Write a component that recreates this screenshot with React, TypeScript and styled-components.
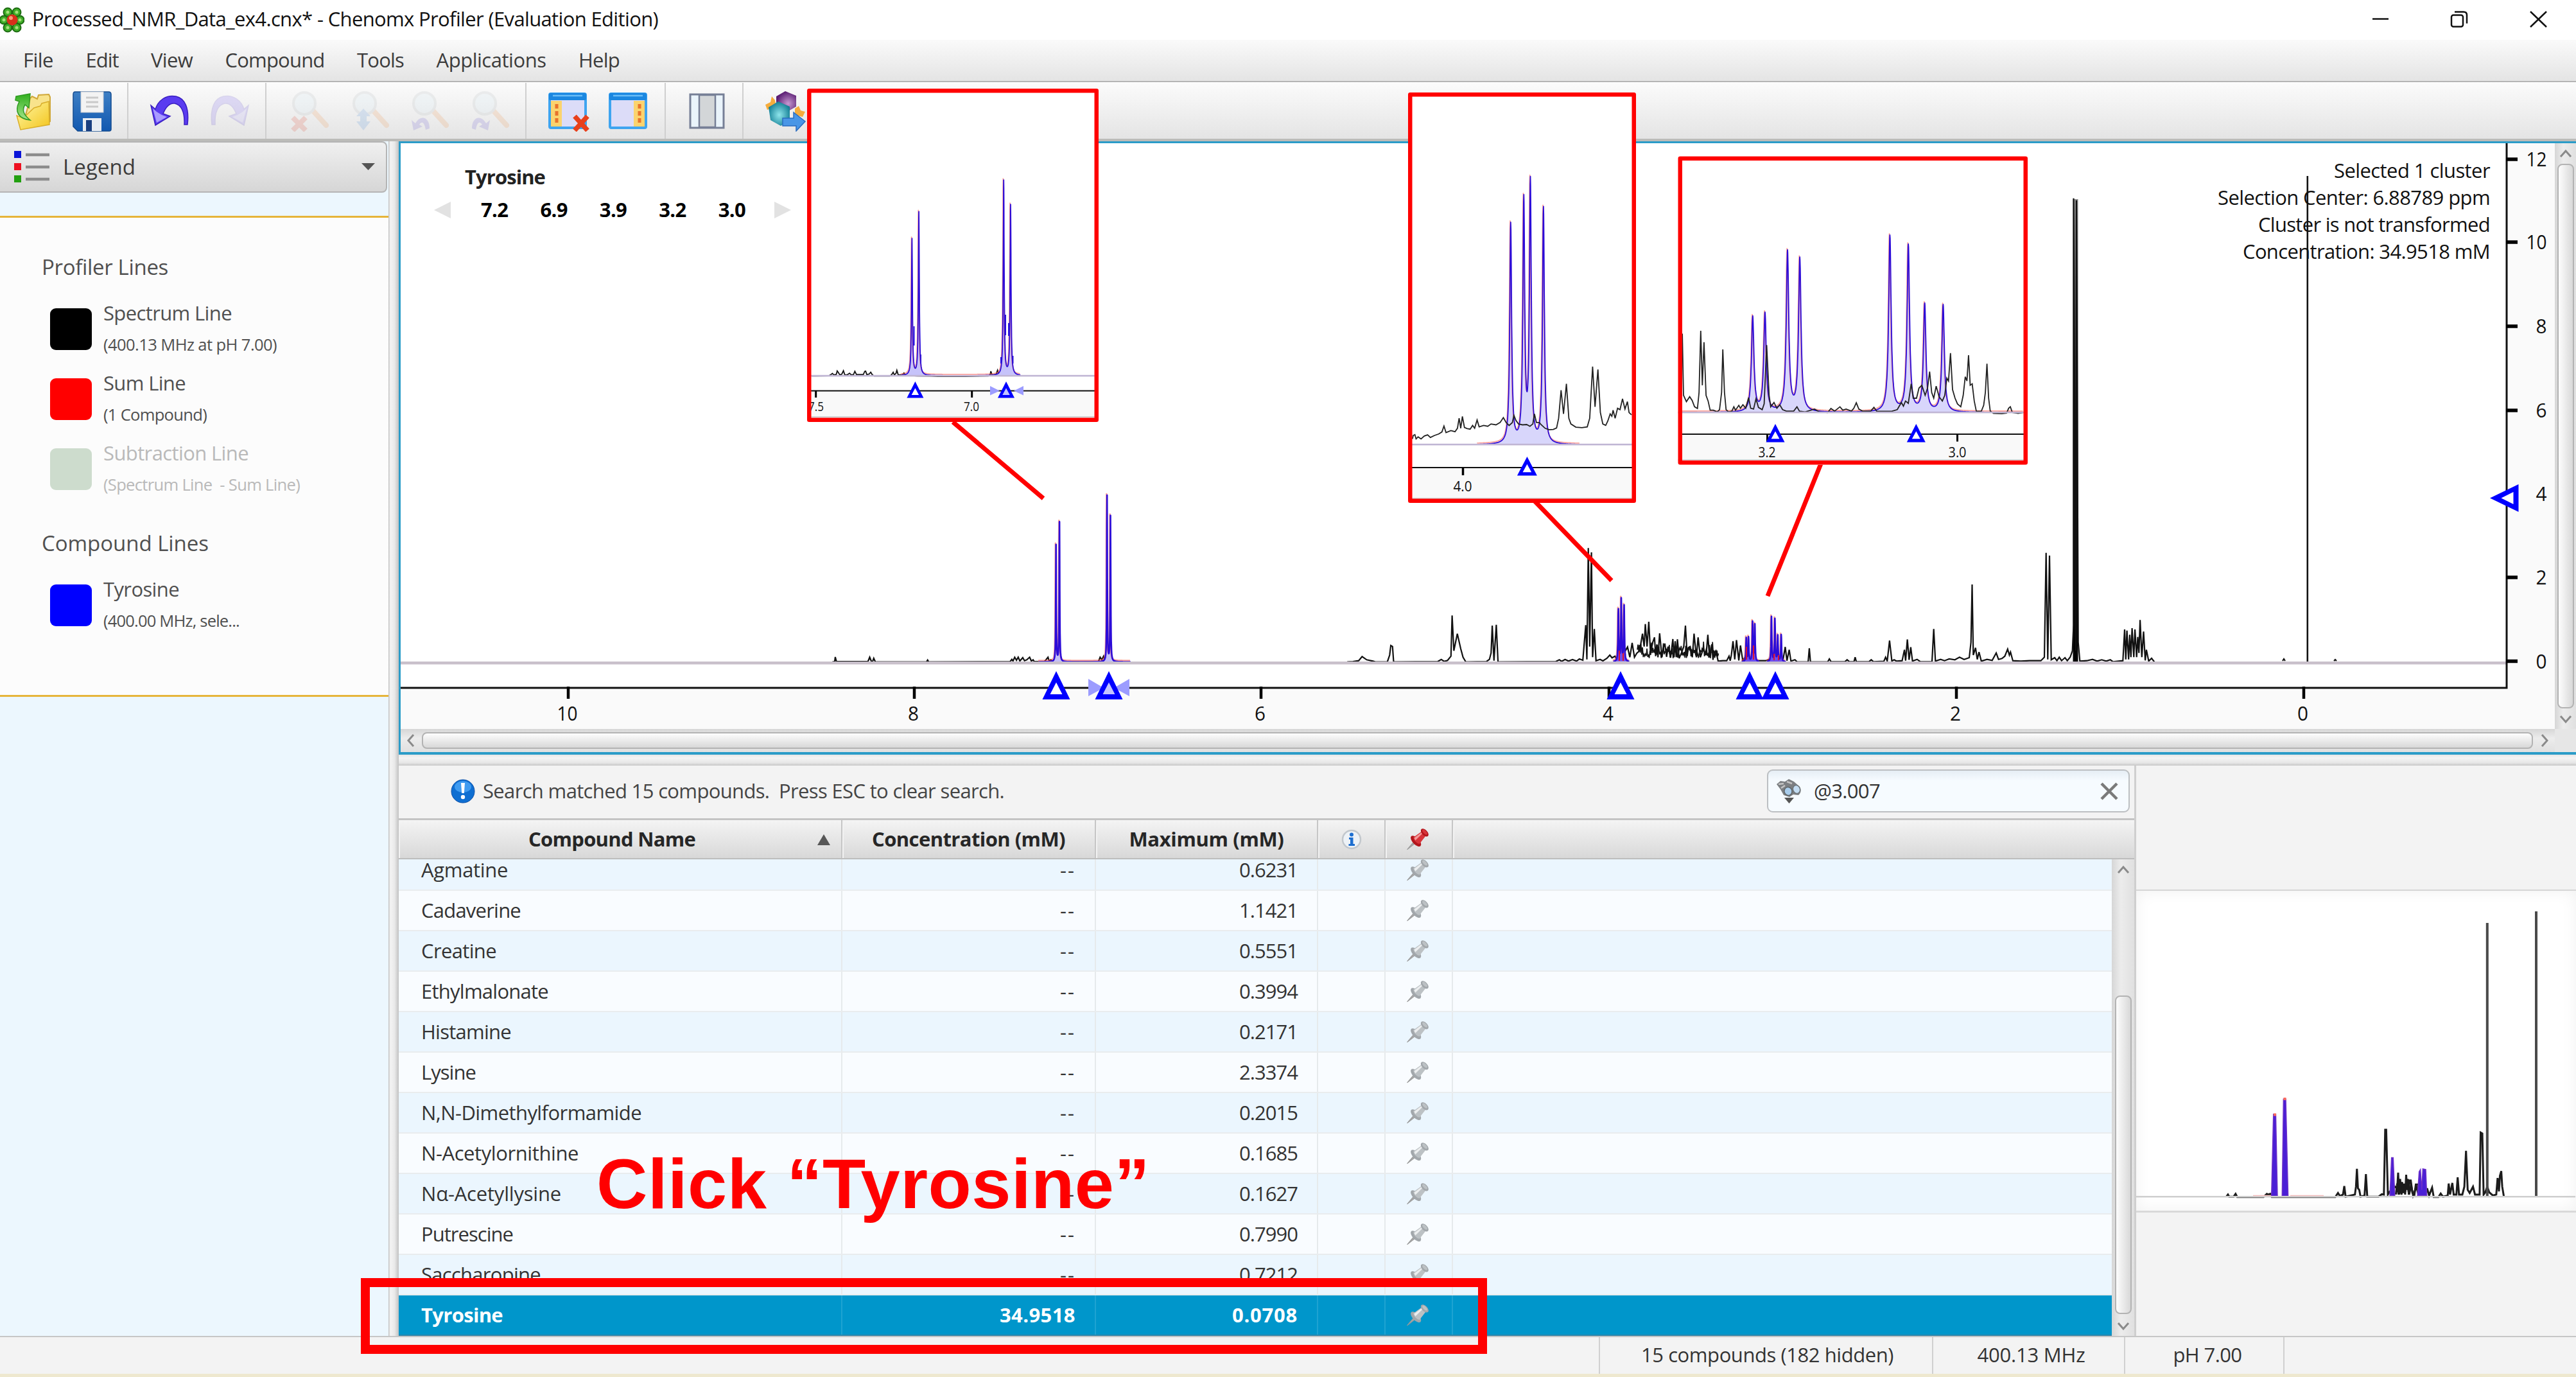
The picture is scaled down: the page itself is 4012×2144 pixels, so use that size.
import React, { useLayoutEffect, useRef, useState } from "react";
import styled, { createGlobalStyle, css } from "styled-components";

const FONT = `"Open Sans", "Noto Sans", sans-serif`;

const Global = createGlobalStyle`
  html, body { margin: 0; padding: 0; }
  body { width: 4012px; height: 2144px; overflow: hidden; background: #f3f3f3; }
  * { box-sizing: border-box; }
  svg { display: block; flex: none; }
`;

/* ---------- text ---------- */

const TextSpan = styled.span<{ $size?: number; $bold?: boolean; $color?: string }>`
  display: inline-block;
  flex: none;
  white-space: pre;
  font-size: ${(p) => p.$size ?? 31}px;
  font-weight: ${(p) => (p.$bold ? 700 : 400)};
  color: ${(p) => p.$color ?? "inherit"};
`;

type TextProps = { w: number; size?: number; bold?: boolean; color?: string; children: string };

/* A label tracked so that it fills the given width. */
function Text({ w, size, bold, color, children }: TextProps) {
  const ref = useRef<HTMLSpanElement>(null);
  const [spacing, setSpacing] = useState(0);
  useLayoutEffect(() => {
    const natural = ref.current!.getBoundingClientRect().width - spacing * children.length;
    setSpacing((w - natural) / children.length);
  }, [w, children]);
  return (
    <TextSpan ref={ref} $size={size} $bold={bold} $color={color} style={{ letterSpacing: spacing }}>
      {children}
    </TextSpan>
  );
}

/* ---------- frame ---------- */

const Window = styled.div`
  position: relative;
  display: flex;
  flex-direction: column;
  width: 4012px;
  height: 2144px;
  overflow: hidden;
  font-family: ${FONT};
  line-height: 1.2;
  color: #333;
  background: #f3f3f3;
`;

const TitleBar = styled.header`
  flex: none;
  display: flex;
  align-items: center;
  height: 62px;
  background: #fff;
  color: #111;
`;
const TitleText = styled.div`
  flex: 1;
  padding: 1px 0 0 12px;
  line-height: 60px;
`;
const Controls = styled.div`
  display: flex;
  align-items: center;
  gap: 92px;
  padding: 0 43px 2px 0;
`;

const MenuBar = styled.nav`
  flex: none;
  display: flex;
  align-items: center;
  gap: 50.5px;
  height: 66px;
  padding: 0 0 1px 36px;
  background: linear-gradient(#fafafa, #e4e4e4);
  border-bottom: 2px solid #b4b4b4;
  color: #3c3c3c;
`;

const Toolbar = styled.div`
  flex: none;
  display: flex;
  height: 92px;
  background: linear-gradient(#fbfbfb, #e4e4e4);
  border-top: 1px solid #fff;
  border-bottom: 4px solid #bcbcb9;
`;
const ToolGroup = styled.div<{ $w: number; $pad: number; $last?: boolean }>`
  display: flex;
  align-items: center;
  gap: 29.5px;
  width: ${(p) => p.$w}px;
  padding-left: ${(p) => p.$pad}px;
  border-right: ${(p) => (p.$last ? "0" : "2px solid #cfcfcf")};
`;

const Body = styled.main`
  flex: none;
  display: flex;
  height: 1860px;
`;

/* ---------- sidebar ---------- */

const Sidebar = styled.aside`
  flex: none;
  width: 605px;
  background: #ecf7fe;
  display: flex;
  flex-direction: column;
`;
const LegendSelect = styled.div`
  flex: none;
  display: flex;
  align-items: center;
  height: 80px;
  margin-right: 2px;
  padding: 0 16px 0 20px;
  background: linear-gradient(#f0f0f0, #d6d6d6);
  border: 2px solid #b5b5b5;
  border-left: 0;
  border-radius: 0 8px 8px 0;
  color: #3c3c3c;
`;
const LegendName = styled.div`
  flex: 1;
  padding-left: 20px;
`;
const LegendCard = styled.section`
  flex: none;
  height: 749px;
  margin-top: 36px;
  padding: 55px 0 0 65px;
  background: #fcfcfc;
  border-top: 3px solid #e6b53a;
  border-bottom: 3px solid #e6b53a;
  color: #505050;
`;
const LegendHeading = styled.h3<{ $top?: number }>`
  margin: ${(p) => p.$top ?? 0}px 0 0;
  height: 44px;
  font-size: 33px;
  font-weight: 400;
  line-height: 44px;
`;
const LegendEntry = styled.div<{ $top?: number; $off?: boolean }>`
  display: flex;
  height: 109.2px;
  margin-top: ${(p) => p.$top ?? 0}px;
  padding-left: 13px;
  color: ${(p) => (p.$off ? "#b9b9b9" : "#505050")};
`;
const Swatch = styled.div<{ $c: string }>`
  width: 65px;
  height: 65px;
  margin: 14px 18px 0 0;
  border-radius: 9px;
  background: ${(p) => p.$c};
`;
const EntryText = styled.div`
  display: flex;
  flex-direction: column;
  align-items: flex-start;
  margin-top: -3px;
  line-height: 49px;
`;

const VSplit = styled.div`
  flex: none;
  width: 16px;
  background: linear-gradient(90deg, #bdbdbd, #f4f4f4 18%, #e9e9e9 60%, #c2c2c2);
`;

/* ---------- right side ---------- */

const Right = styled.div`
  flex: none;
  width: 3391px;
  display: flex;
  flex-direction: column;
`;
const PlotPanel = styled.section`
  flex: none;
  display: grid;
  grid-template-columns: 3355px 33px;
  grid-template-rows: 912px 36px;
  height: 955px;
  border: 3px solid #2b9cc8;
  border-bottom-width: 4px;
  border-right: 0;
  background: #e6e6e6;
`;
const PlotArea = styled.div`
  position: relative;
  background: #fafafa;
`;
const ClusterNav = styled.div`
  position: absolute;
  left: 52px;
  top: 30px;
  color: #222;
`;
const ClusterTitle = styled.div`
  padding-left: 48px;
  height: 50px;
  line-height: 44px;
`;
const ClusterRow = styled.div`
  display: flex;
  align-items: center;
  height: 48px;
  color: #000;
`;
const ClusterValues = styled.div`
  display: flex;
  gap: 50px;
  padding: 0 45px 0 47px;
`;
const ClusterInfo = styled.div`
  position: absolute;
  right: 101px;
  top: 21px;
  display: flex;
  flex-direction: column;
  align-items: flex-end;
  line-height: 42.1px;
  color: #111;
`;

const ScrollTrack = styled.div<{ $v?: boolean; $w?: number }>`
  display: flex;
  flex-direction: ${(p) => (p.$v ? "column" : "row")};
  align-items: center;
  ${(p) => p.$w && css`width: ${p.$w}px;`}
  background: linear-gradient(${(p) => (p.$v ? "90deg" : "180deg")}, #d6d6d6, #ececec 40%, #e0e0e0);
  ${(p) => (p.$v ? css`padding: 8px 0 8px;` : css`padding: 0 8px;`)}
`;
const Thumb = styled.div<{ $v?: boolean; $len: number; $start?: number }>`
  flex: none;
  border: 2px solid #b3b3b3;
  border-radius: 8px;
  ${(p) =>
    p.$v
      ? css`
          width: 26px;
          height: ${p.$len}px;
          margin: ${p.$start ?? 8}px 0 auto;
          background: linear-gradient(90deg, #fdfdfd, #d8d8d8);
        `
      : css`
          height: 26px;
          width: ${p.$len}px;
          margin: 0 auto 0 ${p.$start ?? 8}px;
          background: linear-gradient(#fdfdfd, #d8d8d8);
        `}
`;
const HSplit = styled.div`
  flex: none;
  height: 17px;
  background: linear-gradient(#e6e6e6, #f4f4f4 30%, #e6e6e6 75%, #c6c6c6);
`;
const Lower = styled.div`
  flex: none;
  display: flex;
  height: 888px;
`;

/* ---------- table ---------- */

const TablePanel = styled.section`
  flex: none;
  width: 2706px;
  display: flex;
  flex-direction: column;
  border-right: 3px solid #cfcfcf;
`;
const SearchBar = styled.div`
  flex: none;
  display: flex;
  align-items: flex-start;
  height: 82px;
  padding: 6px 7px 0 81px;
`;
const Message = styled.div`
  flex: 1;
  display: flex;
  align-items: center;
  gap: 12px;
  height: 66px;
  padding-top: 1px;
  color: #444;
`;
const SearchBox = styled.div`
  display: flex;
  align-items: center;
  width: 565px;
  height: 67px;
  padding: 0 16px 0 12px;
  background: linear-gradient(#e6eef5, #f6fbff 25%);
  border: 2px solid #bcbfc2;
  border-radius: 9px;
`;
const SearchValue = styled.div`
  flex: 1;
  padding-left: 19px;
`;

const COLS = "691px 395px 346px 105px 105px 1fr";

const HeadRow = styled.div`
  flex: none;
  display: grid;
  grid-template-columns: ${COLS};
  height: 64px;
  border-top: 3px solid #c4c4c4;
  border-bottom: 2px solid #bdbdbd;
  background: linear-gradient(#f4f4f4, #d8d8d8);
`;
const HeadCell = styled.div<{ $shift?: number }>`
  display: flex;
  align-items: center;
  justify-content: center;
  position: relative;
  padding-right: ${(p) => p.$shift ?? 0}px;
  border-right: 2px solid #c6c6c6;
  box-shadow: inset 2px 0 0 #f2f2f2;
  color: #262626;
  &:last-child { border-right: 0; }
`;
const SortMark = styled.div`
  position: absolute;
  right: 17px;
  top: 22px;
  border: 10.5px solid transparent;
  border-top: 0;
  border-bottom: 17px solid #575757;
`;
const TableBody = styled.div`
  flex: none;
  display: flex;
  height: 742px;
`;
const Rows = styled.div`
  width: 2668px;
  overflow: hidden;
  display: flex;
  flex-direction: column;
  justify-content: flex-end;
`;
const Row = styled.div<{ $alt?: boolean; $sel?: boolean }>`
  flex: none;
  display: grid;
  grid-template-columns: ${COLS};
  height: 63px;
  background: ${(p) => (p.$sel ? "#0096cb" : p.$alt ? "#ebf6fe" : "#f9fcff")};
  border-bottom: 2px solid ${(p) => (p.$sel ? "#2f86aa" : "#e9ecee")};
  color: ${(p) => (p.$sel ? "#fff" : "#333")};
`;
const Cell = styled.div<{ $align?: string; $sel?: boolean }>`
  display: flex;
  align-items: center;
  justify-content: ${(p) => p.$align ?? "flex-start"};
  padding-right: ${(p) => (p.$align === "flex-end" ? 30 : 0)}px;
  padding-left: ${(p) => (p.$align ? 0 : 35)}px;
  border-right: 2px solid ${(p) => (p.$sel ? "#1ea3d2" : "#e6eaec")};
  &:last-child { border-right: 0; }
`;

/* ---------- preview / status ---------- */

const PreviewPanel = styled.aside`
  flex: 1;
  padding-top: 193px;
`;
const Preview = styled.div`
  height: 503px;
  background: #fff;
  border-top: 2px solid #d6d6d6;
  border-bottom: 3px solid #d9d9d9;
  box-shadow: inset 0 0 24px #f1f1f1;
`;

const StatusBar = styled.footer`
  flex: none;
  display: flex;
  justify-content: flex-end;
  height: 64px;
  padding-right: 454px;
  border-top: 2px solid #c6c6c6;
  border-bottom: 5px solid #eee8cf;
`;
const StatusCell = styled.div<{ $w: number; $shift: number }>`
  display: flex;
  align-items: center;
  justify-content: center;
  width: ${(p) => p.$w}px;
  padding: 0 0 1px ${(p) => p.$shift}px;
  border-left: 2px solid #d0d0d0;
  &:last-child { border-right: 2px solid #d0d0d0; }
`;

/* ---------- annotations ---------- */

const Annotations = styled.svg`
  position: absolute;
  inset: 0;
  pointer-events: none;
`;
const Highlight = styled.div`
  position: absolute;
  left: 562px;
  top: 1990px;
  width: 1754px;
  height: 118px;
  border: 14px solid #f00;
`;
const Callout = styled.div`
  position: absolute;
  left: 929px;
  top: 1780px;
  font: 700 110px/125px "Liberation Sans", Arial, sans-serif;
  color: #f00;
`;

/* ---------- spectra ---------- */

type Frame = { ox: number; oy: number; sx: number; sy: number };
type Peak = [number, number];

const toPoints = (f: Frame, src: string) =>
  src
    .trim()
    .split(/\s+/)
    .map((p) => {
      const [x, y] = p.split(",").map(Number);
      return `${(f.ox + x * f.sx).toFixed(1)},${(f.oy + y * f.sy).toFixed(1)}`;
    })
    .join(" ");

/* Sum of Lorentzian lines over a base line. */
const lorentz = (f: Frame, peaks: Peak[], base: number, w: number, from: number, to: number, step = 0.5) => {
  const pts: string[] = [];
  for (let x = from; x <= to + 0.001; x += step) {
    let h = 0;
    for (const [c, top] of peaks) h += (base - top) / (1 + ((x - c) / w) ** 2);
    pts.push(`${(f.ox + x * f.sx).toFixed(1)},${(f.oy + (base - h) * f.sy).toFixed(1)}`);
  }
  return pts.join(" ");
};

function Cluster({ points, fill = "#d8d6fb", sw = 2.4 }: { points: string; fill?: string; sw?: number }) {
  return (
    <g strokeLinejoin="round">
      <polyline points={points} fill={fill} stroke="none" />
      <polyline points={points} fill="none" stroke="#ff5a4a" strokeWidth={sw} transform="translate(-0.8 -2)" opacity={0.55} />
      <polyline points={points} fill="none" stroke="#2c0cd8" strokeWidth={sw} />
    </g>
  );
}

/* Upward triangle with a thick blue rim. */
function Marker({ x, top, bottom, half, fill = "#fff" }: { x: number; top: number; bottom: number; half: number; fill?: string }) {
  const h = bottom - top;
  return (
    <g>
      <path d={`M${x} ${top}L${x + half} ${bottom}H${x - half}Z`} fill="#0000ff" />
      <path d={`M${x} ${top + h * 0.4}L${x + half * 0.44} ${bottom - h * 0.18}H${x - half * 0.44}Z`} fill={fill} />
    </g>
  );
}

const LEFT: Frame = { ox: 600, oy: 740, sx: 0.8929, sy: 1 / 3 };
const MID: Frame = { ox: 2000, oy: 740, sx: 0.8929, sy: 1 / 3 };

const leftNoise =
  "780,872 784,870 785,849 787,870 842,870 845,850 848,870 850,870 852,855 855,872 944,872 946,863 948,872 1090,870 1093,860 1095,868 1098,850 1101,864 1104,850 1107,868 1112,852 1115,866 1119,862 1124,850 1127,868 1130,862 1132,870 1150,870 1153,860 1156,850 1158,868 1161,862 1164,870 1244,870 1247,850 1250,862 1253,845 1256,870";

const midTrace = `110,872 120,870 130,866 136,847 144,862 155,868 160,872 180,872 184,840 186,795 189,800 191,872 268,870 274,860 279,869 285,865
291,845 293,655 296,820 302,740 308,810 312,850 317,872 353,870 358,860 361,830 363,702 366,866 370,698 373,872 474,870 480,862 484,869 490,860 496,868 503,861
510,868 515,858 521,864 526,700 528,860 530.5,340 533,800 536,360 538,850 541,718 544,866 551,860 556,867 563,855 568,840 572,853 577,845 580,858 590,845 599,802
603,850 607,783 611,850 615,832 620,820 625,740 628,800 630,695 633,800 636,684 639,830 643,780 646,757 648,845 650,790 652,850 655,738 659,850 661,810 664,786
667,848 670,800 674,852 678,765 680,850 682,775 684,850 686,766 689,855 693,830 697,800 700,702 703,845 705,805 708,800 712,850 715,740 719,850 722,757 726,850
730,820 732,815 736,840 739,745 742,850 746,790 748,862 750,830 753,820 757,868 765,866 772,866 776,845 778,866 780,840 783,775 786,860 789,770 793,865 796,795
800,866 804,850 812,866 840,866 846,860 853,866 870,866 874,802 877,866 881,815 884,868 891,862 895,872 914,872 916,808 918,872 948,872 951,858 954,871 978,871
982,862 986,871 994,871 996,850 998,871 1020,871 1024,862 1028,871 1046,869 1049,850 1052,868 1056,772 1060,868 1064,862 1068,868 1078,866 1082,815 1084,866 1087,767 1090,862 1093,803
1096,868 1104,860 1110,871 1130,871 1133,718 1136,868 1145,860 1152,866 1160,858 1170,862 1178,850 1186,860 1195,852 1198,780 1200,510 1202,840 1206,806 1209,860 1212,826 1216,868
1226,860 1235,865 1242,830 1246,860 1252,856 1257,845 1262,812 1265,840 1267,826 1271,866 1285,868 1300,866 1320,866 1326,850 1329,362 1332,860 1335,375 1338,862 1344,852 1348,866
1352,850 1356,866 1362,852 1366,866 1371,850 1375,820 1377,700 1377,-1294 1381,820 1382,-1284 1385,780 1388,868 1400,866 1410,860 1418,868 1426,862 1434,868 1441,862 1446,871 1463,866
1466,720 1468,860 1470,725 1473,860 1475,745 1477,850 1479,714 1482,850 1484,720 1487,850 1489,755 1491,830 1493,676 1496,850 1499,730 1502,865 1504,815 1508,868 1513,855 1518,872`;

/* Crowded sugar region, drawn as a second pass of short lines. */
const crowd = (() => {
  const pts: string[] = [];
  let s = 7;
  const rnd = () => ((s = (s * 16807) % 2147483647) / 2147483647);
  for (let x = 616; x < 757; x += 2.6) {
    const low = 815 + rnd() * 42;
    pts.push(`${x},${low} ${x + 1.2},${low - 8 - rnd() * rnd() * 60}`);
  }
  return pts.join(" ");
})();

const X_TICKS: [number, string, number][] = [
  [885, "10", 32],
  [1424, "8", 17],
  [1964, "6", 17],
  [2506, "4", 17],
  [3047, "2", 17],
  [3588, "0", 17],
];
const Y_TICKS: [number, string, number][] = [
  [248, "12", 32],
  [377, "10", 32],
  [508, "8", 17],
  [639, "6", 17],
  [769, "4", 17],
  [899, "2", 17],
  [1029.5, "0", 17],
];

function SpectrumPlot() {
  const aro = lorentz(LEFT, [[1170, 328], [1176, 221], [1259, 98], [1265, 193]], 872, 0.5, 1140, 1300, 0.25);
  const alpha = lorentz(MID, [[583, 630], [588, 582], [593, 612]], 872, 0.7, 574, 602, 0.25);
  const beta = lorentz(MID, [[806, 762], [810, 760], [817, 688], [821, 700]], 872, 0.7, 798, 829, 0.25);
  const beta2 = lorentz(MID, [[850, 663], [856, 674], [861, 752], [867, 747]], 872, 0.7, 842, 875, 0.25);
  return (
    <svg width="3355" height="912" viewBox="624 223 3355 912" fontFamily={FONT} fontSize="30.7" fill="#111">
      <defs>
        <linearGradient id="tall" x1="0" y1="0" x2="0" y2="1">
          <stop offset="0" stopColor="#8a8a8a" />
          <stop offset="0.6" stopColor="#1a1a1a" />
          <stop offset="1" stopColor="#000" />
        </linearGradient>
      </defs>
      <rect x="624" y="223" width="3280" height="848" fill="#fff" />
      <rect x="3228.500" y="310" width="8" height="720" fill="url(#tall)" />
      <g fill="none" stroke="#111" strokeWidth="2.2">
        <polyline points={toPoints(LEFT, leftNoise)} />
        <polyline points={toPoints(MID, midTrace)} />
        <polyline points={toPoints(MID, crowd)} strokeWidth="1.600" />
        <path d="M3593.8 274V1030" strokeWidth="2.600" />
        <path d="M3555 1029l2-3 2 3M3635 1029l2-2 2 2" />
      </g>
      <Cluster points={aro} sw={2.6} fill="#c3bff8" />
      <Cluster points={alpha} sw={2.6} fill="#6b4df0" />
      <Cluster points={beta} sw={2.6} fill="#6b4df0" />
      <Cluster points={beta2} sw={2.6} fill="#6b4df0" />
      <path d="M2522 1029v-16M2528 1029v-12M2720 1027v-20M2731 1027v-22M2763 1028v-10M2770 1028v-8" fill="none" stroke="#e01030" strokeWidth="2" />
      <rect x="624" y="1030" width="3280" height="4.500" fill="#c9c0cb" />
      <path d="M624 1071H3904V223" fill="none" stroke="#111" strokeWidth="3" />
      {X_TICKS.map(([x, t, w]) => (
        <g key={t}>
          <path d={`M${x} 1069v19`} stroke="#000" strokeWidth="4.500" />
          <text x={x - w / 2 - 1.5} y="1122" textLength={w} lengthAdjust="spacingAndGlyphs">{t}</text>
        </g>
      ))}
      {Y_TICKS.map(([y, t, w]) => (
        <g key={t}>
          <path d={`M3903 ${y}h18`} stroke="#000" strokeWidth="5.500" />
          <text x={3966.5 - w} y={y + 11} textLength={w} lengthAdjust="spacingAndGlyphs">{t}</text>
        </g>
      ))}
      <path d="M1695 1057l24 14-24 13zM1759 1057l-24 14 24 13z" fill="#9c9cff" />
      {[1645, 1727, 2524, 2725, 2765].map((x) => (
        <Marker key={x} x={x} top={1045} bottom={1089} half={21.5} fill={x === 1727 ? "#c4c4ff" : "#fff"} />
      ))}
      <path d="M3878 775.500L3922.500 754V797Z" fill="#0000ff" />
      <path d="M3895.500 775.500L3914.500 766V785Z" fill="#fff" />
    </svg>
  );
}

const I1: Frame = { ox: 1200, oy: 120, sx: 0.35714, sy: 0.35714 };
const I2: Frame = { ox: 2180, oy: 120, sx: 0.6378, sy: 0.4464 };

const inset1Noise =
  "180,1303 255,1302 262,1298 270,1292 276,1298 287,1296 291,1281 296,1288 302,1298 311,1295 318,1280 324,1298 335,1298 345,1291 352,1298 362,1297 368,1283 375,1297 395,1297 405,1297 411,1283 415,1282 420,1297 430,1295 437,1287 444,1298 452,1303 520,1303 528,1298 535,1287 540,1298 547,1292 551,1278 557,1298 575,1298 582,1290 590,1300 640,1303 700,1304 730,1305 850,1305 950,1303 958,1298 961,1282 966,1298 984,1296 990,1278 996,1298";
const inset2Trace = `31,1262 33,1250 37,1247 40,1262 45,1255 52,1262 60,1252 68,1248 75,1257 85,1250 95,1245 103,1238 108,1217 113,1240 125,1233 135,1237 141,1225 145,1190 149,1225
153,1184 158,1222 165,1226 172,1228 178,1215 183,1225 189,1196 194,1220 205,1215 215,1218 223,1210 235,1213 245,1205 253,1188 260,1205 267,1215 275,1205 279,1180 284,1198 290,1210
300,1213 310,1212 318,1218 325,1210 329,1175 334,1205 341,1205 345,1212 355,1225 365,1230 375,1229 383,1224 388,1190 394,1092 400,1175 407,1070 413,1190 418,1210 430,1221 445,1223
458,1220 464,1190 471,1010 477,1150 484,1020 490,1170 496,1210 503,1215 508,1200 514,1175 518,1183 521,1162 526,1190 532,1155 538,1160 544,1122 550,1158 556,1132 560,1170 566,1178`;
const inset3Trace = `690,895 693,1110 700,1132 708,1115 714,1128 720,1150 727,1156 731,1100 735,885 739,1075 743,925 748,1110 753,1130 758,1162 766,1162 775,1168 781,1160 786,1100 789,950 793,1100
797,1160 803,1168 811,1165 816,1150 820,1162 828,1145 832,1155 838,1143 845,1155 852,1118 857,1155 864,1158 870,1122 876,1152 885,1160 890,1140 896,935 902,1110 906,1150 914,1135
921,1155 928,1143 935,1160 944,1165 962,1165 970,1150 976,1165 990,1168 1013,1158 1025,1168 1045,1170 1053,1156 1062,1165 1075,1150 1082,1162 1090,1158 1103,1165 1109,1155 1115,1136
1121,1158 1130,1165 1150,1165 1158,1152 1165,1166 1200,1166 1215,1160 1225,1135 1230,1148 1235,1130 1242,1138 1249,1070 1254,1120 1262,1120 1268,1085 1275,1075 1283,1110 1289,1085
1294,1027 1299,1100 1304,1120 1310,1078 1317,1115 1325,1130 1331,1110 1336,1050 1340,1060 1345,963 1350,1090 1356,1120 1362,1140 1370,1150 1376,1110 1381,1045 1385,1060 1389,970
1393,1075 1398,1070 1403,1130 1408,1165 1420,1166 1426,1145 1430,1100 1434,1000 1438,1120 1442,1165 1450,1173 1470,1174 1482,1172 1487,1155 1491,1150 1496,1170 1510,1173 1522,1170`;

type InsetBoxProps = { x: number; y: number; w: number; h: number; axis: number; foot: number; base: number };
function InsetBox({ x, y, w, h, axis, foot, base, children, curves }: InsetBoxProps & { children: React.ReactNode; curves: React.ReactNode }) {
  return (
    <g>
      <rect x={x} y={y} width={w} height={h} fill="#fff" />
      <rect x={x} y={axis} width={w} height={y + h - axis} fill="#f9f9f9" />
      <rect x={x} y={foot} width={w} height="2.500" fill="#d4d4d4" />
      {curves}
      <rect x={x} y={base - 1.2} width={w} height="2.600" fill="#c0b6d4" />
      {children}
      <rect x={x + 3.25} y={y + 3.25} width={w - 6.5} height={h - 6.5} fill="none" stroke="#f00" strokeWidth="6.500" strokeLinejoin="round" />
    </g>
  );
}

const TickText = ({ x, y, size, w, children }: { x: number; y: number; size: number; w: number; children: string }) => (
  <text x={x} y={y} fontSize={size} textLength={w} lengthAdjust="spacingAndGlyphs">{children}</text>
);

function Insets() {
  const a = lorentz(I1, [[617, 708], [647, 590], [1017, 453], [1047, 560]], 1302, 2.4, 570, 1090);
  const b = lorentz(I2, [[271, 516], [303, 443], [319, 378], [351, 461]], 1283, 2.7, 190, 440);
  const c = lorentz(
    I2,
    [[862, 839], [892, 828], [947, 612], [977, 637], [1197, 556], [1242, 590], [1282, 796], [1327, 797]],
    1170, 3.6, 690, 1523,
  );
  return (
    <Annotations width="4012" height="2144" viewBox="0 0 4012 2144" fontFamily={FONT} fill="#111">
      <g stroke="#f00" strokeWidth="7">
        <path d="M1484 657L1625 776M2390 780L2510 904M2836 722L2753 928" />
      </g>
      <InsetBox
        x={1257} y={138} w={454} h={519} axis={608} foot={648} base={585}
        curves={
          <>
            <polyline points={toPoints(I1, inset1Noise)} fill="none" stroke="#111" strokeWidth="1.800" />
            <Cluster points={a} sw={1.8} fill="#c6c3fa" />
            <path d="M1423.500 508v30M1434 566v-14M1566 490v32M1571 503v20M1559 566v-10M1577.500 566v-12" stroke="#2a10d8" strokeWidth="2" fill="none" />
          </>
        }
      >
        <path d="M1260 608.500H1708" stroke="#111" strokeWidth="2" />
        <path d="M1270.700 608v11M1513.700 608v11" stroke="#000" strokeWidth="3" />
        <TickText x={1259} y={639.5} size={19.4} w={24}>7.5</TickText>
        <TickText x={1501} y={639.5} size={19.4} w={24}>7.0</TickText>
        <path d="M1542 601l15 7.500-15 7zM1594 601l-15 7.500 15 7z" fill="#9c9cff" />
        <Marker x={1425.4} top={594} bottom={619.5} half={13} />
        <Marker x={1567} top={594} bottom={619.5} half={13} fill="#c4c4ff" />
      </InsetBox>
      <InsetBox
        x={2193} y={144} w={355} h={639} axis={728} foot={775} base={692}
        curves={
          <>
            <Cluster points={b} sw={1.8} />
            <polyline points={toPoints(I2, inset2Trace)} fill="none" stroke="#222" strokeWidth="1.800" />
          </>
        }
      >
        <path d="M2196 728H2545" stroke="#111" strokeWidth="2.200" />
        <path d="M2278.500 728v12" stroke="#000" strokeWidth="3.500" />
        <TickText x={2263.5} y={765} size={22} w={29}>4.0</TickText>
        <Marker x={2378.4} top={711} bottom={740.5} half={15.5} />
      </InsetBox>
      <InsetBox
        x={2613.5} y={243.5} w={544.5} h={480} axis={676} foot={715} base={642}
        curves={
          <>
            <Cluster points={c} sw={1.8} />
            <polyline points={toPoints(I2, inset3Trace)} fill="none" stroke="#222" strokeWidth="1.800" />
          </>
        }
      >
        <path d="M2618 676H3153" stroke="#111" strokeWidth="2.200" />
        <path d="M2752.500 676v11.500M3048.500 676v11.500" stroke="#000" strokeWidth="3" />
        <TickText x={2738.5} y={711.5} size={21} w={27}>3.2</TickText>
        <TickText x={3034.5} y={711.5} size={21} w={28}>3.0</TickText>
        <Marker x={2765} top={660} bottom={688.5} half={14.5} />
        <Marker x={2984.3} top={660} bottom={688.5} half={14.5} />
      </InsetBox>
    </Annotations>
  );
}

const PV: Frame = { ox: 3200, oy: 1380, sx: 0.5179, sy: 0.4872 };
const previewTrace = `518,992 523,985 527,992 540,992 546,983 551,993 630,993 640,983 645,986 650,983 655,993 846,993 854,980 860,990 869,985 873,958 877,992 905,985
908,960 911,903 914,965 918,970 922,992 934,988 938,920 942,992 976,992 986,984 992,985 996,778 999,778 1004,985 1010,975 1018,970 1026,960 1032,965 1035,915 1038,985
1041,935 1044,980 1047,945 1050,980 1053,950 1056,985 1059,922 1062,970 1064,935 1067,985 1069,940 1073,940 1078,980 1084,985 1088,953 1095,953 1100,985 1118,985 1122,965 1128,988
1137,963 1142,993 1156,993 1163,982 1170,992 1184,988 1187,950 1191,985 1198,948 1202,985 1210,985 1214,930 1218,985 1228,985 1234,960 1239,845 1244,970 1250,980 1260,960 1266,985
1280,985 1283,787 1288,790 1292,985 1297,978 1303,960 1309,978 1320,988 1330,985 1334,932 1338,975 1341,925 1345,910 1348,960 1353,992`;

function PreviewPlot() {
  return (
    <svg width="684" height="497" viewBox="3328 1387 684 497">
      <g fill="none" strokeWidth="3" stroke="#1c1c1c">
        <polyline points={toPoints(PV, previewTrace)} />
        <polyline points={toPoints(PV, "1028,985 1032,950 1036,985 1040,960 1045,985 1050,955 1056,975 1062,950 1068,985 1074,955 1080,988 1090,960 1096,985")} />
        <path d="M3951 1419V1862M3874.800 1437V1862" stroke="#4a4a4a" strokeWidth="4" />
      </g>
      <g stroke="#6a2fc8" strokeWidth="1.500" fill="#4a1fd6">
        <polygon points={toPoints(PV, "654,990 660,728 667,728 672,990")} />
        <polygon points={toPoints(PV, "686,990 690,680 697,680 704,990")} />
        <polygon points={toPoints(PV, "1010,988 1015,867 1020,867 1025,988")} />
        <polygon points={toPoints(PV, "1093,988 1098,912 1102,905 1106,970 1109,903 1118,905 1121,988")} />
      </g>
      <path d="M3542 1735.500h4M3557.500 1711h4" stroke="#ff6a5a" strokeWidth="4" />
      <path d="M3328 1863.300H4012" stroke="#cfcfcf" strokeWidth="2.600" />
      <path d="M3510 1861.500H3538M3568 1861.500H3620" stroke="#f6c0c0" strokeWidth="1.500" />
    </svg>
  );
}

/* ---------- icons ---------- */

const AppLogo = () => (
  <svg width="38" height="40" viewBox="0 0 38 40">
    <g fill="#3fae28" stroke="#1d6b12" strokeWidth="2">
      <circle cx="12" cy="8" r="6.500" /><circle cx="26" cy="8" r="6.500" />
      <circle cx="31" cy="20" r="6.500" /><circle cx="6" cy="20" r="6.500" />
      <circle cx="12" cy="32" r="6.500" /><circle cx="26" cy="32" r="6.500" />
    </g>
    <g fill="#a6e07c"><circle cx="12" cy="8" r="2.500" /><circle cx="26" cy="8" r="2.500" /><circle cx="31" cy="20" r="2.500" /><circle cx="6" cy="20" r="2.500" /><circle cx="12" cy="32" r="2.500" /><circle cx="26" cy="32" r="2.500" /></g>
    <circle cx="19" cy="20" r="8.500" fill="#d8301a" /><circle cx="17" cy="17" r="3" fill="#ff9a7a" />
  </svg>
);
const OpenIcon = () => (
  <svg width="64" height="64" viewBox="0 0 64 64">
    <defs>
      <linearGradient id="folder" x1="0" y1="0" x2="1" y2="1">
        <stop offset="0" stopColor="#fff9a8" /><stop offset="1" stopColor="#f3c41c" />
      </linearGradient>
      <linearGradient id="leaf" x1="0" y1="0" x2="0" y2="1">
        <stop offset="0" stopColor="#2fae1c" /><stop offset="1" stopColor="#a5e58c" />
      </linearGradient>
    </defs>
    <path d="M30 12l3-3 8 4 2-6 16-1 2 4v38l-6 4-38 8z" fill="#f8e38c" stroke="#d0a83a" strokeWidth="2" />
    <path d="M36 27l10-3 2-4 11-3 1 36-45 8-6-22 10 4z" fill="url(#folder)" stroke="#d9ae2a" strokeWidth="1.500" />
    <path d="M8 9l22-4-2 22-6-5c-5 8-3 15 8 24C12 44 5 33 13 17l-6-2z" fill="url(#leaf)" stroke="#2f9a22" strokeWidth="1.500" />
  </svg>
);
const SaveIcon = () => (
  <svg width="64" height="64" viewBox="0 0 64 64">
    <defs>
      <linearGradient id="disk" x1="0" y1="0" x2="0" y2="1">
        <stop offset="0" stopColor="#3d7fc4" /><stop offset="1" stopColor="#1158b0" />
      </linearGradient>
    </defs>
    <path d="M6 2h52q4 0 4 4v54q0 3-3 3H10l-7-7V6q0-4 3-4z" fill="url(#disk)" stroke="#154c90" strokeWidth="1.500" />
    <rect x="15" y="2" width="35" height="32" fill="#f3f3f3" stroke="#c8ccd2" />
    <path d="M23 11h19M23 18h19M23 25h19" stroke="#c9c9c9" strokeWidth="3" />
    <rect x="18" y="43" width="29" height="20" fill="#e9edf2" /><rect x="23" y="46" width="9" height="17" fill="#1a3f80" />
  </svg>
);
const UndoIcon = ({ flip }: { flip?: boolean }) => (
  <svg width="64" height="64" viewBox="0 0 64 64" opacity={flip ? 0.15 : 1}>
    <g transform={flip ? "matrix(-1 0 0 1 64 0)" : undefined}>
      <path d="M3 23l7 6C14 16 26 6 42 9c14 3 21 18 18 44h-5c1-20-5-31-15-33-8-1-14 6-18 16l11 4L10 54z" fill="#5a3cf0" stroke="#3a1fc0" strokeWidth="1.500" />
      <path d="M6 28l6 5 8 5 8 3-16 9z" fill="#a99cff" />
    </g>
  </svg>
);
const LensIcon = ({ kind }: { kind: "x" | "v" | "undo" | "redo" }) => (
  <svg width="64" height="64" viewBox="0 0 64 64" opacity="0.16">
    <path d="M38 32l20 22" stroke="#f08a3a" strokeWidth="8" strokeLinecap="round" />
    <circle cx="24" cy="20" r="17" fill="#cfe8f4" stroke="#a9b2b6" strokeWidth="4" />
    {kind === "x" && <path d="M6 42l20 20M26 42L6 62" stroke="#e03a20" strokeWidth="8" />}
    {kind === "v" && <path d="M22 28l11 12h-6v8h6L22 62 11 48h6v-8h-6z" fill="#3f86d8" />}
    {kind === "undo" && <path d="M4 46l3 16 14-6-5-3c4-6 8-4 10 8l6-2c0-18-14-22-22-8z" fill="#5a4ad0" />}
    {kind === "redo" && <path d="M32 46l-3 16-14-6 5-3c-4-6-8-4-10 8l-6-2c0-18 14-22 22-8z" fill="#5a4ad0" />}
  </svg>
);
const PanelIcon = ({ left, cross }: { left?: boolean; cross?: boolean }) => (
  <svg width="64" height="64" viewBox="0 0 64 64">
    <rect x="2" y="5" width="56" height="53" rx="2" fill="#dcdcf8" stroke="#3ea4f0" strokeWidth="4" />
    <rect x="1" y="4" width="58" height="11" rx="2" fill="#1b87e0" /><path d="M7 8h46" stroke="#69bdf6" strokeWidth="2.500" />
    <g transform={left ? "translate(4 16)" : "translate(39 16)"}>
      <rect width="17" height="40" fill="#fbd36e" />
      <path d="M9 5v30" stroke="#e8742c" strokeWidth="5" strokeDasharray="7 4" />
    </g>
    {cross && <path d="M41 40l20 22M61 40L41 62" stroke="#e8401c" strokeWidth="7.500" />}
  </svg>
);
const ColumnsIcon = () => (
  <svg width="64" height="64" viewBox="0 0 64 64">
    <rect x="6" y="6" width="52" height="52" fill="#eaf4fb" stroke="#767f96" strokeWidth="3" />
    <rect x="20" y="7" width="25" height="50" fill="#d3d6d8" stroke="#767f96" strokeWidth="2.500" />
  </svg>
);
const HexIcon = () => (
  <svg width="64" height="64" viewBox="0 0 64 64">
    <defs>
      <radialGradient id="plum" cx="0.6" cy="0.6" r="0.6"><stop offset="0" stopColor="#c79ad2" /><stop offset="1" stopColor="#5a1c72" /></radialGradient>
      <radialGradient id="teal" cx="0.5" cy="0.55" r="0.55"><stop offset="0" stopColor="#8fe6ec" /><stop offset="1" stopColor="#137f95" /></radialGradient>
    </defs>
    <path d="M10 9l5 6 2 10-14 5-3-8 8-4zM46 28l6-4 3 7 7 2-4 8-12-3z" fill="#f5ac3c" />
    <path d="M17 9L31 1l17 7v17l-14 8-17-7z" fill="url(#plum)" />
    <path d="M5 26l15-9 18 8v21l-14 9-16-9z" fill="url(#teal)" />
    <path d="M27 43h17v-9l18 14-14 15v-8H27z" fill="#4a96e6" stroke="#2a6cc0" strokeWidth="1.500" />
  </svg>
);
const LegendIcon = () => (
  <svg width="58" height="56" viewBox="0 0 58 56">
    <g stroke="#8c8c8c" strokeWidth="4.500"><path d="M20 9h37M20 28h37M20 47h37" /></g>
    <path d="M2 3h11v11H2z" fill="#0a14d8" /><path d="M2 22h11v11H2z" fill="#ee1020" /><path d="M2 41h11v11H2z" fill="#22a010" />
  </svg>
);
const AlertIcon = () => (
  <svg width="38" height="38" viewBox="0 0 38 38">
    <circle cx="19" cy="19" r="18" fill="#0f6fd2" stroke="#0a4fa8" /><ellipse cx="19" cy="12" rx="13" ry="9" fill="#3f9bf0" />
    <path d="M16 6h6l-1.200 16h-3.600z" fill="#fff" /><circle cx="19" cy="28" r="3.200" fill="#fff" />
  </svg>
);
const InfoIcon = () => (
  <svg width="32" height="34" viewBox="0 0 32 34">
    <circle cx="16" cy="17" r="14" fill="#edf2f7" stroke="#c2c7cc" strokeWidth="2.500" />
    <g fill="#1d6ed0"><circle cx="16" cy="9.500" r="3" /><path d="M12 14h6.500v10H21v3H11.500v-3H14v-7h-2z" /></g>
  </svg>
);
const PinIcon = ({ red }: { red?: boolean }) => {
  const dark = red ? "#b3161c" : "#a2a7ab";
  const mid = red ? "#d8343a" : "#bcc1c4";
  const light = red ? "#f59a9a" : "#eceeef";
  return (
    <svg width="40" height="37" viewBox="0 0 40 37">
      <g transform="translate(19.500 17.500) rotate(46)">
        <path d="M-1.800 8L0 25 1.800 8z" fill="#a8a8a8" stroke="#9a9a9a" />
        <ellipse cx="0" cy="6" rx="10.500" ry="5" fill={dark} />
        <path d="M-4.500-12L-7 5q7 4 14 0L4.500-12z" fill={mid} />
        <path d="M-3.500-11L-5.500 4.500l4 1.200V-11z" fill={light} />
        <ellipse cx="0" cy="-13" rx="7.500" ry="4.200" fill={dark} />
        <ellipse cx="-0.500" cy="-13.800" rx="5" ry="2.300" fill={mid} />
      </g>
    </svg>
  );
};
const FindIcon = () => (
  <svg width="40" height="38" viewBox="0 0 40 38">
    <path d="M1 8L7 3l7 1 6-4 8 4 9 8q4 8-2 13l-8-1-6 4-9-3-5-9z" fill="#7c7f82" />
    <path d="M4 8l8-1M17 4l8 3M8 14l6-4" stroke="#c4c4c4" strokeWidth="2.500" />
    <ellipse cx="19" cy="19" rx="6" ry="6.500" fill="#a9cdec" stroke="#5f6669" strokeWidth="1.500" transform="rotate(-20 19 19)" />
    <ellipse cx="32" cy="16" rx="5.500" ry="6.500" fill="#c2dcf2" stroke="#6d7478" strokeWidth="1.500" transform="rotate(-20 32 16)" />
    <path d="M13 29h15l-7.500 9z" fill="#555" />
  </svg>
);
const Chevron = ({ dir }: { dir: "up" | "down" | "left" | "right" }) => {
  const d = { up: "M2 13L10 4l8 9", down: "M2 6l8 9 8-9", left: "M12 2L4 11l8 9", right: "M4 2l8 9-8 9" }[dir];
  const side = dir === "left" || dir === "right";
  return (
    <svg width={side ? 16 : 20} height={side ? 22 : 18}>
      <path d={d} fill="none" stroke="#8a8a8a" strokeWidth="3" />
    </svg>
  );
};

/* ---------- data ---------- */

const MENU: [string, number][] = [["File", 47], ["Edit", 51], ["View", 65], ["Compound", 155], ["Tools", 73], ["Applications", 171], ["Help", 64]];
const CLUSTERS = ["7.2", "6.9", "3.9", "3.2", "3.0"];
const INFO: [string, number][] = [
  ["Selected 1 cluster", 243],
  ["Selection Center: 6.88789 ppm", 424],
  ["Cluster is not transformed", 361],
  ["Concentration: 34.9518 mM", 385],
];
const COMPOUNDS: [string, number, string][] = [
  ["Agmatine", 135, "0.6231"],
  ["Cadaverine", 155, "1.1421"],
  ["Creatine", 117, "0.5551"],
  ["Ethylmalonate", 198, "0.3994"],
  ["Histamine", 140, "0.2171"],
  ["Lysine", 85, "2.3374"],
  ["N,N-Dimethylformamide", 343, "0.2015"],
  ["N-Acetylornithine", 245, "0.1685"],
  ["Nα-Acetyllysine", 218, "0.1627"],
  ["Putrescine", 143, "0.7990"],
  ["Saccharopine", 186, "0.7212"],
];

export default function App() {
  return (
    <Window>
      <Global />
      <TitleBar>
        <AppLogo />
        <TitleText>
          <Text w={975}>Processed_NMR_Data_ex4.cnx* - Chenomx Profiler (Evaluation Edition)</Text>
        </TitleText>
        <Controls>
          <svg width="32" height="30" viewBox="0 0 32 30"><path d="M4 14.500h25" stroke="#111" strokeWidth="2.500" /></svg>
          <svg width="32" height="30" viewBox="0 0 32 30" fill="none" stroke="#111" strokeWidth="2.500">
            <rect x="3" y="8.500" width="18" height="18" rx="3" /><path d="M8 3.500h14q5 0 5 5v13" />
          </svg>
          <svg width="30" height="30" viewBox="0 0 30 30"><path d="M2 3l25 24M27 3L2 27" stroke="#111" strokeWidth="2.500" /></svg>
        </Controls>
      </TitleBar>
      <MenuBar>
        {MENU.map(([t, w]) => <Text key={t} w={w}>{t}</Text>)}
      </MenuBar>
      <Toolbar>
        <ToolGroup $w={200} $pad={17}><OpenIcon /><SaveIcon /></ToolGroup>
        <ToolGroup $w={215} $pad={32}><UndoIcon /><UndoIcon flip /></ToolGroup>
        <ToolGroup $w={405} $pad={35}><LensIcon kind="x" /><LensIcon kind="v" /><LensIcon kind="undo" /><LensIcon kind="redo" /></ToolGroup>
        <ToolGroup $w={217} $pad={34}><PanelIcon left cross /><PanelIcon /></ToolGroup>
        <ToolGroup $w={121} $pad={32}><ColumnsIcon /></ToolGroup>
        <ToolGroup $w={140} $pad={34} $last><HexIcon /></ToolGroup>
      </Toolbar>
      <Body>
        <Sidebar>
          <LegendSelect>
            <LegendIcon />
            <LegendName><Text w={113} size={33}>Legend</Text></LegendName>
            <svg width="22" height="12"><path d="M0 0h21L10.500 11z" fill="#555" /></svg>
          </LegendSelect>
          <LegendCard>
            <LegendHeading><Text w={197} size={33}>Profiler Lines</Text></LegendHeading>
            <LegendEntry $top={28}>
              <Swatch $c="#000" />
              <EntryText><Text w={200}>Spectrum Line</Text><Text w={270} size={25.6}>(400.13 MHz at pH 7.00)</Text></EntryText>
            </LegendEntry>
            <LegendEntry>
              <Swatch $c="#f00" />
              <EntryText><Text w={128}>Sum Line</Text><Text w={161} size={25.6}>(1 Compound)</Text></EntryText>
            </LegendEntry>
            <LegendEntry $off>
              <Swatch $c="#cddccd" />
              <EntryText><Text w={226}>Subtraction Line</Text><Text w={306} size={25.6}>(Spectrum Line  - Sum Line)</Text></EntryText>
            </LegendEntry>
            <LegendHeading $top={30}><Text w={260} size={33}>Compound Lines</Text></LegendHeading>
            <LegendEntry $top={28}>
              <Swatch $c="#00f" />
              <EntryText><Text w={118}>Tyrosine</Text><Text w={212} size={25.6}>(400.00 MHz, sele...</Text></EntryText>
            </LegendEntry>
          </LegendCard>
        </Sidebar>
        <VSplit />
        <Right>
          <PlotPanel>
            <PlotArea>
              <SpectrumPlot />
              <ClusterNav>
                <ClusterTitle><Text w={125} bold>Tyrosine</Text></ClusterTitle>
                <ClusterRow>
                  <svg width="26" height="26"><path d="M26 0v26L0 13z" fill="#e2e2e2" /></svg>
                  <ClusterValues>
                    {CLUSTERS.map((c) => <Text key={c} w={42.4} bold>{c}</Text>)}
                  </ClusterValues>
                  <svg width="26" height="26"><path d="M0 0v26l26-13z" fill="#e2e2e2" /></svg>
                </ClusterRow>
              </ClusterNav>
              <ClusterInfo>
                {INFO.map(([t, w]) => <Text key={t} w={w}>{t}</Text>)}
              </ClusterInfo>
            </PlotArea>
            <ScrollTrack $v><Chevron dir="up" /><Thumb $v $len={848} $start={6} /><Chevron dir="down" /></ScrollTrack>
            <ScrollTrack><Chevron dir="left" /><Thumb $len={3288} $start={9} /><Chevron dir="right" /></ScrollTrack>
          </PlotPanel>
          <HSplit />
          <Lower>
            <TablePanel>
              <SearchBar>
                <Message>
                  <AlertIcon />
                  <Text w={812}>Search matched 15 compounds.  Press ESC to clear search.</Text>
                </Message>
                <SearchBox>
                  <FindIcon />
                  <SearchValue><Text w={103}>@3.007</Text></SearchValue>
                  <svg width="28" height="28"><path d="M2 2l24 24M26 2L2 26" stroke="#7a7a7a" strokeWidth="4.500" /></svg>
                </SearchBox>
              </SearchBar>
              <HeadRow>
                <HeadCell $shift={25}><Text w={260} bold>Compound Name</Text><SortMark /></HeadCell>
                <HeadCell><Text w={301} bold>Concentration (mM)</Text></HeadCell>
                <HeadCell><Text w={241} bold>Maximum (mM)</Text></HeadCell>
                <HeadCell><InfoIcon /></HeadCell>
                <HeadCell><PinIcon red /></HeadCell>
                <HeadCell />
              </HeadRow>
              <TableBody>
                <Rows>
                  {COMPOUNDS.map(([name, w, max], i) => (
                    <Row key={name} $alt={i % 2 === 0}>
                      <Cell><Text w={w}>{name}</Text></Cell>
                      <Cell $align="flex-end"><Text w={24}>--</Text></Cell>
                      <Cell $align="flex-end"><Text w={91}>{max}</Text></Cell>
                      <Cell />
                      <Cell $align="center"><PinIcon /></Cell>
                      <Cell />
                    </Row>
                  ))}
                  <Row $sel>
                    <Cell $sel><Text w={127} bold>Tyrosine</Text></Cell>
                    <Cell $sel $align="flex-end"><Text w={118} bold>34.9518</Text></Cell>
                    <Cell $sel $align="flex-end"><Text w={102} bold>0.0708</Text></Cell>
                    <Cell $sel />
                    <Cell $sel $align="center"><PinIcon /></Cell>
                    <Cell $sel />
                  </Row>
                </Rows>
                <ScrollTrack $v $w={35}>
                  <Chevron dir="up" /><Thumb $v $len={496} $start={186} /><Chevron dir="down" />
                </ScrollTrack>
              </TableBody>
            </TablePanel>
            <PreviewPanel><Preview><PreviewPlot /></Preview></PreviewPanel>
          </Lower>
        </Right>
      </Body>
      <StatusBar>
        <StatusCell $w={519} $shift={4}><Text w={393}>15 compounds (182 hidden)</Text></StatusCell>
        <StatusCell $w={299} $shift={8}><Text w={168}>400.13 MHz</Text></StatusCell>
        <StatusCell $w={250} $shift={10}><Text w={107}>pH 7.00</Text></StatusCell>
      </StatusBar>
      <Insets />
      <Highlight />
      <Callout><Text w={862} size={110} bold>Click “Tyrosine”</Text></Callout>
    </Window>
  );
}
